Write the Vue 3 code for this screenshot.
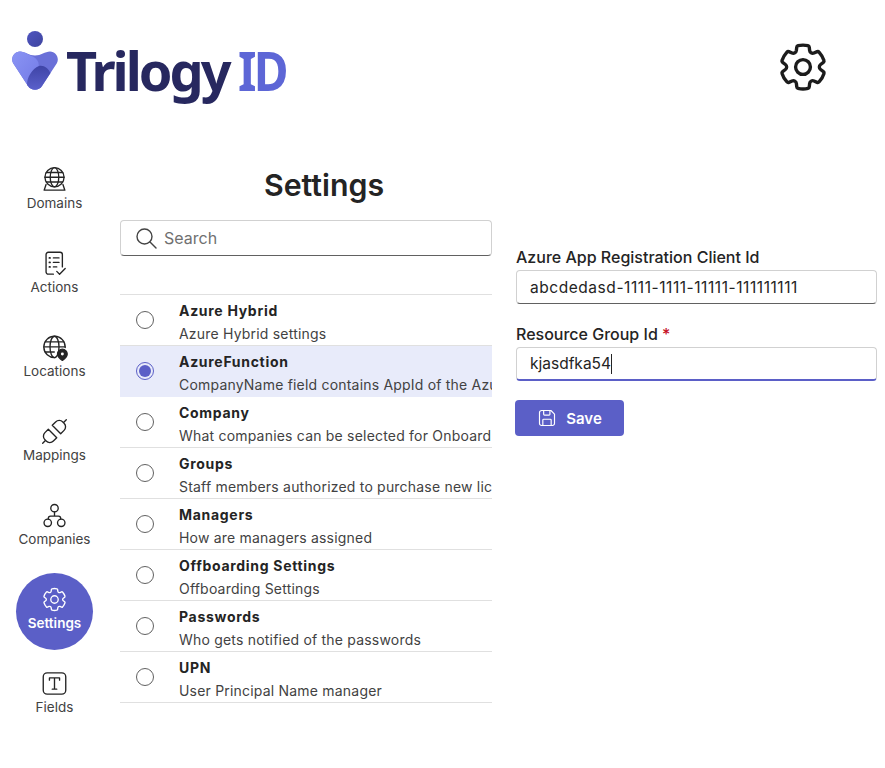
<script setup>
const gear = 'M12.01 2.25c.74 0 1.47.1 2.18.25.32.07.55.33.59.65l.17 1.53a1.38 1.38 0 0 0 1.92 1.11l1.4-.61c.3-.13.64-.06.85.17a9.8 9.8 0 0 1 2.2 3.8c.1.3 0 .63-.26.82l-1.24.92a1.38 1.38 0 0 0 0 2.22l1.24.92c.26.19.36.52.27.82a9.8 9.8 0 0 1-2.2 3.8.75.75 0 0 1-.85.17l-1.4-.62a1.38 1.38 0 0 0-1.93 1.12l-.17 1.52a.75.75 0 0 1-.57.65 9.52 9.52 0 0 1-4.41 0 .75.75 0 0 1-.57-.65l-.17-1.52a1.38 1.38 0 0 0-1.93-1.11l-1.4.62a.75.75 0 0 1-.85-.18 9.8 9.8 0 0 1-2.2-3.8c-.1-.3 0-.63.26-.82l1.24-.92a1.38 1.38 0 0 0 0-2.22l-1.24-.92a.75.75 0 0 1-.27-.82 9.8 9.8 0 0 1 2.2-3.8c.22-.23.55-.3.85-.17l1.4.62c.83.36 1.79-.2 1.93-1.13l.17-1.52a.75.75 0 0 1 .58-.65c.72-.16 1.45-.24 2.2-.25Z'

const nav = [
  { key: 'domains', label: 'Domains' },
  { key: 'actions', label: 'Actions' },
  { key: 'locations', label: 'Locations' },
  { key: 'mappings', label: 'Mappings' },
  { key: 'companies', label: 'Companies' },
  { key: 'settings', label: 'Settings', active: true },
  { key: 'fields', label: 'Fields' }
]

const rows = [
  { name: 'Azure Hybrid', desc: 'Azure Hybrid settings' },
  { name: 'AzureFunction', desc: 'CompanyName field contains AppId of the Azu', selected: true },
  { name: 'Company', desc: 'What companies can be selected for Onboard' },
  { name: 'Groups', desc: 'Staff members authorized to purchase new lic' },
  { name: 'Managers', desc: 'How are managers assigned' },
  { name: 'Offboarding Settings', desc: 'Offboarding Settings' },
  { name: 'Passwords', desc: 'Who gets notified of the passwords' },
  { name: 'UPN', desc: 'User Principal Name manager' }
]
</script>

<template>
  <div class="page">
    <header class="header">
      <div class="logo">
        <svg class="mark" viewBox="0 0 46 60" width="46" height="60">
          <defs>
            <linearGradient id="lg1" x1="0" y1="0" x2="1" y2="1">
              <stop offset="0" stop-color="#8a94f4" />
              <stop offset="1" stop-color="#737ae6" />
            </linearGradient>
            <linearGradient id="lg2" x1="0" y1="0" x2="0" y2="1">
              <stop offset="0" stop-color="#3f44a6" />
              <stop offset="1" stop-color="#5a60cb" />
            </linearGradient>
            <linearGradient id="lg3" x1="0" y1="0" x2="1" y2="1">
              <stop offset="0" stop-color="#4f55c0" />
              <stop offset="1" stop-color="#3f459f" />
            </linearGradient>
          </defs>
          <circle cx="23" cy="8" r="8" fill="url(#lg3)" />
          <path d="M8 20.500C13 20.500 17 24.500 23 24.500S33 20.500 38 20.500C44 20.500 47.500 27 45 32L30 55C27 60 19 60 16 55L1 32C-1.500 27 2 20.500 8 20.500Z" fill="#6a70d8" />
          <path d="M8 20.500C13 20.500 17 24.500 21 25.500 26 28 28 33 26 38L20 46 16 55 1 32C-1.500 27 2 20.500 8 20.500Z" fill="url(#lg1)" />
          <path d="M15 54C15 46 20 38 27 35 32 34 36 37 38.500 42L30 55C27 60 19 60 16 55Z" fill="url(#lg2)" />
        </svg>
        <span class="wordmark">Trilogy<span class="id">ID</span></span>
      </div>
      <svg class="top-gear" viewBox="0 0 24 24" width="54" height="54" fill="none" stroke="#1c1c1c" stroke-width="1.500">
        <path :d="gear" />
        <circle cx="12" cy="12" r="3.300" />
      </svg>
    </header>

    <div class="body">
      <nav class="side">
        <div v-for="item in nav" :key="item.key" class="nav-item" :class="{ active: item.active }">
          <svg class="nav-icon" viewBox="0 0 24 24" width="27" height="27" fill="none" stroke="currentColor" stroke-width="1.200" stroke-linecap="round" stroke-linejoin="round">
            <template v-if="item.key === 'domains'">
              <circle cx="12" cy="10" r="8.500" />
              <ellipse cx="12" cy="10" rx="3.800" ry="8.500" />
              <path d="M3.500 10h17M4.700 5.800h14.600M4.700 14.200h14.600" />
              <path d="M4.500 16.500 2.800 21.500h18.400l-1.700-5" />
            </template>
            <template v-else-if="item.key === 'actions'">
              <path d="M11 21.500H6.500A2 2 0 0 1 4.500 19.500V4A2 2 0 0 1 6.500 2h10.500a2 2 0 0 1 2 2v11" />
              <path d="M11 7h5M11 11h5M11 15h3" />
              <path d="M7.500 7h.5M7.500 11h.5M7.500 15h.5" stroke-width="1.600" />
              <path d="m14 19 2.500 2.500 5-5" />
            </template>
            <template v-else-if="item.key === 'locations'">
              <path d="M12.500 21A9.500 9.500 0 1 1 21.500 12" />
              <ellipse cx="12" cy="11.500" rx="4" ry="9.500" />
              <path d="M2.600 11.500h18.800M3.800 7h16.400M3.800 16h8" />
              <path d="M19 13.500a4.300 4.300 0 0 1 4.300 4.300c0 2.700-4.300 5.700-4.300 5.700s-4.300-3-4.300-5.700A4.300 4.300 0 0 1 19 13.500Z" fill="currentColor" />
              <circle cx="19" cy="17.800" r="1.300" fill="#fff" stroke="none" />
            </template>
            <template v-else-if="item.key === 'mappings'">
              <path d="M10 6.500 13 3.500a4.500 4.500 0 0 1 6.400 0l1.100 1.100a4.500 4.500 0 0 1 0 6.400l-3 3Z" />
              <path d="M6.500 10 14 17.500 11 20.500a4.500 4.500 0 0 1-6.400 0L3.500 19.400a4.500 4.500 0 0 1 0-6.400Z" />
              <path d="M20.500 3.500 22.500 1.500M3.500 20.500 1.500 22.500" />
            </template>
            <template v-else-if="item.key === 'companies'">
              <circle cx="12" cy="5.500" r="3.300" />
              <circle cx="6" cy="18.500" r="3.300" />
              <circle cx="18" cy="18.500" r="3.300" />
              <path d="M12 8.800V12M6.500 15.200V14.500A2 2 0 0 1 8.500 12.500h7a2 2 0 0 1 2 2v.7" />
            </template>
            <template v-else-if="item.key === 'settings'">
              <path :d="gear" />
              <circle cx="12" cy="12" r="3.300" />
            </template>
            <template v-else>
              <rect x="2" y="2.500" width="20" height="19" rx="3.500" />
              <path d="M7.500 9V7h9v2M12 7v10M10 17h4" />
            </template>
          </svg>
          <span class="nav-label">{{ item.label }}</span>
        </div>
      </nav>

      <section class="list-col">
        <h1 class="title">Settings</h1>
        <div class="search">
          <svg viewBox="0 0 24 24" width="24" height="24" fill="none" stroke="#444" stroke-width="1.400" stroke-linecap="round">
            <circle cx="10.500" cy="10.500" r="7.500" />
            <path d="m16 16 6 6" />
          </svg>
          <span class="search-text">Search</span>
        </div>
        <ul class="list">
          <li v-for="row in rows" :key="row.name" class="row" :class="{ selected: row.selected }">
            <span class="radio"><span v-if="row.selected" class="dot"></span></span>
            <div class="row-text">
              <div class="row-name">{{ row.name }}</div>
              <div class="row-desc">{{ row.desc }}</div>
            </div>
          </li>
        </ul>
      </section>

      <section class="form">
        <label class="field-label">Azure App Registration Client Id</label>
        <div class="input long">abcdedasd-1111-1111-11111-111111111</div>
        <label class="field-label second">Resource Group Id <span class="req">*</span></label>
        <div class="input focused">kjasdfka54<span class="caret"></span></div>
        <button class="save" type="button">
          <svg viewBox="0 0 24 24" width="20" height="20" fill="none" stroke="#fff" stroke-width="1.400" stroke-linejoin="round">
            <path d="M3 5.500A2.500 2.500 0 0 1 5.500 3h11.200L21 7.300v11.200a2.500 2.500 0 0 1-2.500 2.500h-13A2.500 2.500 0 0 1 3 18.500Z" />
            <path d="M8 3v4.500a1 1 0 0 0 1 1h5.500a1 1 0 0 0 1-1V3M7 21v-6.500a1 1 0 0 1 1-1h8a1 1 0 0 1 1 1V21" />
          </svg>
          <span>Save</span>
        </button>
      </section>
    </div>
  </div>
</template>

<style scoped>
.page {
  width: 885px;
  height: 768px;
  overflow: hidden;
  background: #fff;
  font-family: Inter, "Liberation Sans", sans-serif;
  color: #242424;
}
.header {
  height: 153px;
  box-sizing: border-box;
  padding: 31px 55px 0 12px;
  display: flex;
  justify-content: space-between;
  align-items: flex-start;
}
.logo {
  display: flex;
  align-items: flex-start;
}
.mark {
  flex: none;
}
.wordmark {
  margin-left: 8px;
  margin-top: 1px;
  font-family: "Noto Sans", sans-serif;
  font-size: 54px;
  line-height: 76px;
  font-weight: 700;
  letter-spacing: -3px;
  color: #27285f;
  white-space: nowrap;
}
.id {
  display: inline-block;
  margin-left: 9px;
  transform: scaleX(0.88);
  transform-origin: left center;
  color: #5d66d6;
}
.top-gear {
  margin-top: 9px;
}
.body {
  display: flex;
  align-items: flex-start;
}
.side {
  width: 120px;
  flex: none;
  box-sizing: border-box;
  padding-left: 16px;
  display: flex;
  flex-direction: column;
  gap: 7px;
}
.nav-item {
  width: 77px;
  height: 77px;
  box-sizing: border-box;
  padding-top: 13px;
  border-radius: 50%;
  display: flex;
  flex-direction: column;
  align-items: center;
  gap: 1px;
  color: #424242;
}
.nav-item.active {
  background: #5b5fc7;
  color: #fff;
}
.nav-icon {
  color: #242424;
}
.active .nav-icon {
  color: #fff;
}
.nav-label {
  font-size: 13.500px;
  line-height: 18px;
}
.active .nav-label {
  font-weight: 600;
}
.list-col {
  width: 372px;
  flex: none;
}
.title {
  margin: 12px 0 15px;
  padding-left: 36px;
  text-align: center;
  font-size: 30.300px;
  line-height: 40px;
  font-weight: 600;
  color: #242424;
}
.search {
  height: 36px;
  box-sizing: border-box;
  border: 1px solid #d1d1d1;
  border-bottom-color: #616161;
  border-radius: 4px;
  display: flex;
  align-items: center;
  gap: 6px;
  padding-left: 13px;
}
.search-text {
  font-size: 16px;
  color: #707070;
}
.list {
  list-style: none;
  margin: 38px 0 0;
  padding: 0;
  border-top: 1px solid #e0e0e0;
}
.row {
  height: 51px;
  box-sizing: border-box;
  border-bottom: 1px solid #e0e0e0;
  display: flex;
  align-items: center;
  overflow: hidden;
}
.row.selected {
  background: #e8ebfa;
  border-bottom-color: #e8ebfa;
}
.radio {
  flex: none;
  width: 18px;
  height: 18px;
  box-sizing: border-box;
  margin-left: 16px;
  margin-right: 25px;
  border: 1px solid #616161;
  border-radius: 50%;
  display: flex;
  align-items: center;
  justify-content: center;
}
.selected .radio {
  border-color: #5b5fc7;
}
.dot {
  width: 12px;
  height: 12px;
  border-radius: 50%;
  background: #5b5fc7;
}
.row-text {
  min-width: 0;
  padding-top: 4px;
  white-space: nowrap;
}
.row-name {
  font-size: 14px;
  line-height: 23px;
  font-weight: 700;
  letter-spacing: 0.700px;
}
.row-desc {
  font-size: 14px;
  line-height: 23px;
  letter-spacing: 0.200px;
  color: #424242;
}
.form {
  margin-left: 24px;
  width: 361px;
  flex: none;
  padding-top: 94px;
  display: flex;
  flex-direction: column;
  align-items: flex-start;
}
.field-label {
  font-size: 16px;
  line-height: 20px;
  font-weight: 500;
  margin-bottom: 3px;
}
.field-label.second {
  margin-top: 20px;
}
.req {
  color: #c50f1f;
}
.input {
  width: 100%;
  height: 34px;
  box-sizing: border-box;
  border: 1px solid #d1d1d1;
  border-bottom-color: #616161;
  border-radius: 4px;
  padding-left: 13px;
  display: flex;
  align-items: center;
  font-size: 15.500px;
  color: #242424;
}
.input.long {
  letter-spacing: 0.550px;
}
.input.focused {
  border-bottom: 2px solid #5b5fc7;
}
.caret {
  width: 1px;
  height: 20px;
  background: #242424;
}
.save {
  margin: 19px 0 0 -1px;
  width: 109px;
  height: 36px;
  border: none;
  border-radius: 4px;
  background: #5b5fc7;
  color: #fff;
  font-family: inherit;
  font-size: 15px;
  font-weight: 600;
  display: flex;
  align-items: center;
  justify-content: center;
  gap: 9px;
}
</style>
